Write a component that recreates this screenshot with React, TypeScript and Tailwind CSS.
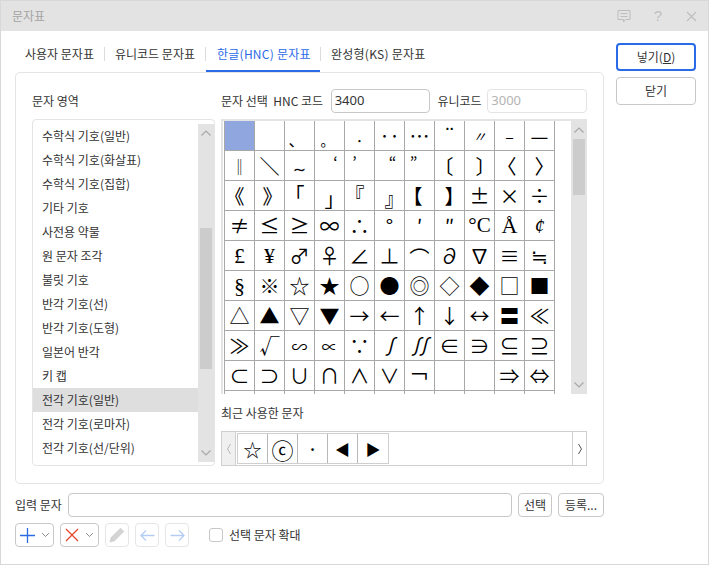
import React from 'react';

const areas = [
  '수학식 기호(일반)', '수학식 기호(화살표)', '수학식 기호(집합)', '기타 기호', '사전용 약물', '원 문자 조각', '불릿 기호',
  '반각 기호(선)', '반각 기호(도형)', '일본어 반각', '키 캡', '전각 기호(일반)', '전각 기호(로마자)', '전각 기호(선/단위)',
];

// glyph, extra classes (nudges where the symbol font sits off centre)
const chars: [string, string?][] = [
  [''], [''], ['、', '-translate-x-[3px] translate-y-[3px] text-[16px]'], ['。', '-translate-x-[2px] translate-y-[4px] text-[14px]'], ['·', 'translate-y-[4px] text-[16px]'], ['‥'], ['…'], ['¨', '-translate-y-[1px]'], ['〃', 'text-[14px] italic'], ['–', 'text-[16px]'], ['—'],
  ['‖', 'text-[16px]'], ['＼'], ['∼', 'translate-y-[2px] text-[16px]'], ['‘', 'translate-x-[6px] -translate-y-[4px] text-[16px]'], ['’', '-translate-x-[5px] -translate-y-[4px] text-[16px]'], ['“', 'translate-x-[3px] -translate-y-[4px] text-[16px]'], ['”', '-translate-x-[6px] -translate-y-[4px] text-[16px]'], ['〔', '-translate-x-[6px]'], ['〕', 'translate-x-[6px]'], ['〈', '-translate-x-[3px]'], ['〉', 'translate-x-[5px]'],
  ['《', '-translate-x-[5px]'], ['》', 'translate-x-[3px]'], ['「', '-translate-x-[5px] -translate-y-[1px]'], ['」', 'translate-x-[5px] translate-y-[3px]'], ['『', '-translate-x-[5px] -translate-y-[1px]'], ['』', 'translate-x-[5px] translate-y-[3px]'], ['【', '-translate-x-[7px]'], ['】', 'translate-x-[5px]'], ['±'], ['×'], ['÷'],
  ['≠'], ['≤'], ['≥'], ['∞'], ['∴'], ['°'], ['′'], ['″'], ['°C', "text-[21px] font-['Liberation_Serif']"], ['Å', "text-[22px] font-['Liberation_Serif']"], ['¢', "italic font-['Liberation_Serif']"],
  ['£', "text-[22px] font-['Liberation_Serif']"], ['¥', "text-[22px] font-['Liberation_Serif']"], ['♂'], ['♀'], ['∠'], ['⊥'], ['⌒', 'translate-y-[2px]'], ['∂'], ['∇'], ['≡'], ['≒'],
  ['§', "text-[22px] font-['Liberation_Serif']"], ['※'], ['☆'], ['★'], ['○'], ['●'], ['◎'], ['◇'], ['◆'], ['□'], ['■'],
  ['△'], ['▲'], ['▽'], ['▼'], ['→'], ['←'], ['↑'], ['↓'], ['↔'], ['〓'], ['≪'],
  ['≫'], ['√'], ['∽', 'text-[16px]'], ['∝', 'text-[16px]'], ['∵'], ['∫', 'italic'], ['∬', 'italic'], ['∈'], ['∋'], ['⊆'], ['⊇'],
  ['⊂'], ['⊃'], ['∪'], ['∩'], ['∧'], ['∨'], ['￢'], [''], [''], ['⇒'], ['⇔'],
  [''], [''], [''], [''], [''], [''], [''], [''], [''], [''], [''],
];

const recent: [string, string][] = [['☆', 'text-[18px]'], ['ⓒ', 'text-[22px]'], ['·', 'text-[20px]'], ['◀', 'text-[15px]'], ['▶', 'text-[15px]']];

const Chevron = ({ up, className }: { up?: boolean; className?: string }) => (
  <svg width="12" height="8" viewBox="0 0 12 8" fill="none" stroke="currentColor" strokeWidth="1.2" className={className}>
    <path d={up ? 'M1.5 6.5L6 2l4.5 4.5' : 'M1.5 1.5L6 6l4.5-4.5'} />
  </svg>
);

const Scrollbar = ({ width, thumbTop, thumbHeight }: { width: string; thumbTop: string; thumbHeight: string }) => (
  <div className={`${width} h-full bg-[#e3e3e3] flex flex-col items-center pt-[5px] pb-[5px] text-[#a8a8a8]`}>
    <Chevron up />
    <div className={`w-[12px] bg-[#cccccc] ${thumbTop} ${thumbHeight}`} />
    <div className="flex-1" />
    <Chevron />
  </div>
);

const Btn = ({ children, className }: { children: React.ReactNode; className: string }) => (
  <div className={`flex items-center justify-center bg-white rounded-[4px] border border-[#c8c8c8] ${className}`}>{children}</div>
);

const TabSep = () => <div className="absolute right-0 top-[16px] h-[14px] w-px bg-[#dcdcdc]" />;

export default function App() {
  return (
    <div className="w-[709px] h-[565px] bg-white border border-[#d8d8d8] overflow-hidden flex flex-col text-[12px] text-[#333333] font-['Noto_Sans_CJK_KR','Liberation_Sans',sans-serif]">
      <div className="h-[30px] shrink-0 bg-[#e3e3e3] flex items-center pl-[11px] pr-[10px] text-[#a3a3a3]">
        <span className="flex-1">문자표</span>
        <svg width="14" height="14" viewBox="0 0 14 14" fill="none" stroke="#bdbdbd" className="mr-[23px]">
          <path d="M1 1.5h12v9H8.500L6.500 13v-2.500H1z" />
          <path d="M3.500 4.500h7M3.500 7.500h7" />
        </svg>
        <span className="text-[#c0c0c0] text-[15px] mr-[24px] font-['Liberation_Sans']">?</span>
        <svg width="11" height="11" viewBox="0 0 11 11" stroke="#bdbdbd" strokeWidth="1.1" className="mr-[1px]">
          <path d="M1 1l9 9M10 1l-9 9" />
        </svg>
      </div>

      <div className="flex pl-[14px]">
        <div className="w-[589px]">
          <div className="h-[41px] flex items-stretch">
            <div className="w-[90px] pt-[14px] pl-[10px] relative">사용자 문자표<TabSep /></div>
            <div className="w-[101px] pt-[14px] pl-[10px] relative">유니코드 문자표<TabSep /></div>
            <div className="w-[114px] pt-[14px] pl-[11px] tracking-[0.25px] border-b-[2px] border-[#2b6be8] text-[#2b6be8]">한글(HNC) 문자표</div>
            <div className="pt-[14px] pl-[11px] tracking-[0.25px] relative">완성형(KS) 문자표<div className="absolute left-0 top-[16px] h-[14px] w-px bg-[#dcdcdc]" /></div>
          </div>

          <div className="h-[412px] border border-[#e4e4e4] rounded-[5px] pt-[16px] pl-[16px] pr-[16px] flex gap-[6px]">
            <div className="w-[183px] shrink-0">
              <div className="h-[24px] mb-[6px] flex items-center">문자 영역</div>
              <div className="h-[347px] border border-[#e4e4e4] rounded-[4px] pt-[4px] pb-[3px] flex">
                <div className="flex-1">
                  {areas.map((a, i) => (
                    <div key={a} className={`h-[24px] pl-[9px] flex items-center ${i === 11 ? 'bg-[#dedede]' : ''}`}>{a}</div>
                  ))}
                </div>
                <Scrollbar width="w-[16px]" thumbTop="mt-[91px]" thumbHeight="h-[141px]" />
              </div>
            </div>

            <div className="w-[366px] shrink-0">
              <div className="h-[24px] mb-[6px] flex items-center">
                <span className="w-[110px]">문자 선택&nbsp; HNC 코드</span>
                <div className="w-[100px] h-[24px] border border-[#c8c8c8] rounded-[4px] pl-[3px] flex items-center text-[13px] font-['Noto_Sans',sans-serif]">3400</div>
                <span className="ml-[7px] w-[50px]">유니코드</span>
                <div className="w-[100px] h-[24px] border border-[#e4e4e4] rounded-[4px] pl-[3px] flex items-center text-[13px] text-[#b4b4b4] font-['Noto_Sans',sans-serif]">3000</div>
              </div>

              <div className="h-[275px] border-t-[2px] border-l-[2px] border-[#e4e4e4] flex justify-between overflow-hidden">
                <div className="w-[332px] h-[273px] pl-px overflow-hidden">
                  <div className="grid grid-cols-[repeat(11,30px)] auto-rows-[30px] border-l border-[#a8a8a8]">
                    {chars.map(([c, cls], i) => (
                      <div key={i} className={`border-r border-b border-[#a8a8a8] flex items-center justify-center text-[20px] leading-none text-black font-['Noto_Sans_CJK_KR','DejaVu_Sans',serif] ${i === 0 ? 'bg-[#8fa6de]' : ''}`}>
                        <span className={`block ${cls ?? ''}`}>{c}</span>
                      </div>
                    ))}
                  </div>
                </div>
                <Scrollbar width="w-[16px]" thumbTop="mt-[5px]" thumbHeight="h-[56px]" />
              </div>

              <div className="h-[37px] pt-[10px] flex items-start">최근 사용한 문자</div>

              <div className="h-[35px] border border-[#cfcfcf] flex">
                <div className="w-[14px] bg-[#f0f0f0] border-r border-[#cfcfcf] flex items-center justify-center text-[#b8b8b8]">
                  <svg width="6" height="12" viewBox="0 0 6 12" fill="none" stroke="currentColor"><path d="M4.500 1L1.500 6l3 5" /></svg>
                </div>
                <div className="flex-1 pt-[1px] pl-px">
                  <div className="flex w-fit border border-[#cfcfcf] h-[31px]">
                    {recent.map(([c, cls], i) => (
                      <div key={i} className={`w-[30px] border-r last:border-r-0 border-[#b8b8b8] flex items-center justify-center leading-none text-black font-['Noto_Sans_CJK_KR','DejaVu_Sans',serif] ${cls}`}>{c}</div>
                    ))}
                  </div>
                </div>
                <div className="w-[14px] border-l border-[#cfcfcf] flex items-center justify-center text-[#555555]">
                  <svg width="6" height="12" viewBox="0 0 6 12" fill="none" stroke="currentColor"><path d="M1.500 1l3 5-3 5" /></svg>
                </div>
              </div>
            </div>
          </div>

          <div className="mt-[9px] h-[24px] flex items-center">
            <span className="w-[53px]">입력 문자</span>
            <div className="w-[444px] h-[24px] border border-[#c8c8c8] rounded-[4px]" />
            <Btn className="ml-[6px] w-[34px] h-[24px]">선택</Btn>
            <Btn className="ml-[6px] w-[46px] h-[24px]">등록...</Btn>
          </div>

          <div className="mt-[6px] h-[24px] flex items-center">
            <Btn className="w-[39px] h-[24px] gap-[6px]">
              <svg width="15" height="15" viewBox="0 0 15 15" stroke="#2b6be8" strokeWidth="1.3"><path d="M7.500 0v15M0 7.500h15" /></svg>
              <Chevron className="text-[#808080] w-[9px]" />
            </Btn>
            <Btn className="ml-[6px] w-[39px] h-[24px] gap-[6px]">
              <svg width="14" height="14" viewBox="0 0 14 14" stroke="#e8442e" strokeWidth="1.3"><path d="M1 1l12 12M13 1L1 13" /></svg>
              <Chevron className="text-[#808080] w-[9px]" />
            </Btn>
            <Btn className="ml-[6px] w-[24px] h-[24px] border-[#e6e6e6]">
              <svg width="16" height="16" viewBox="0 0 16 16" fill="#d4d4d4" stroke="#c4c4c4" strokeWidth="0.6"><path d="M1 15l1.200-4.500L11.500 1.200l3.300 3.300L5.500 13.800z" /></svg>
            </Btn>
            <Btn className="ml-[6px] w-[24px] h-[24px] border-[#e6e6e6]">
              <svg width="15" height="11" viewBox="0 0 15 11" fill="none" stroke="#b4cdf6" strokeWidth="1.3"><path d="M14.500 5.500H1M6 .5l-5 5 5 5" /></svg>
            </Btn>
            <Btn className="ml-[6px] w-[24px] h-[24px] border-[#e6e6e6]">
              <svg width="15" height="11" viewBox="0 0 15 11" fill="none" stroke="#b4cdf6" strokeWidth="1.3"><path d="M.5 5.500H14M9 .5l5 5-5 5" /></svg>
            </Btn>
            <div className="ml-[20px] w-[14px] h-[14px] border border-[#c8c8c8] rounded-[3px]" />
            <span className="ml-[6px]">선택 문자 확대</span>
          </div>
        </div>

        <div className="w-[80px] ml-[12px] pt-[12px] flex flex-col gap-[6px]">
          <div className="h-[28px] border-[2px] border-[#2b6be8] rounded-[4px] flex items-center justify-center">넣기(<span className="underline">D</span>)</div>
          <div className="h-[28px] border border-[#c8c8c8] rounded-[4px] flex items-center justify-center">닫기</div>
        </div>
      </div>
    </div>
  );
}
